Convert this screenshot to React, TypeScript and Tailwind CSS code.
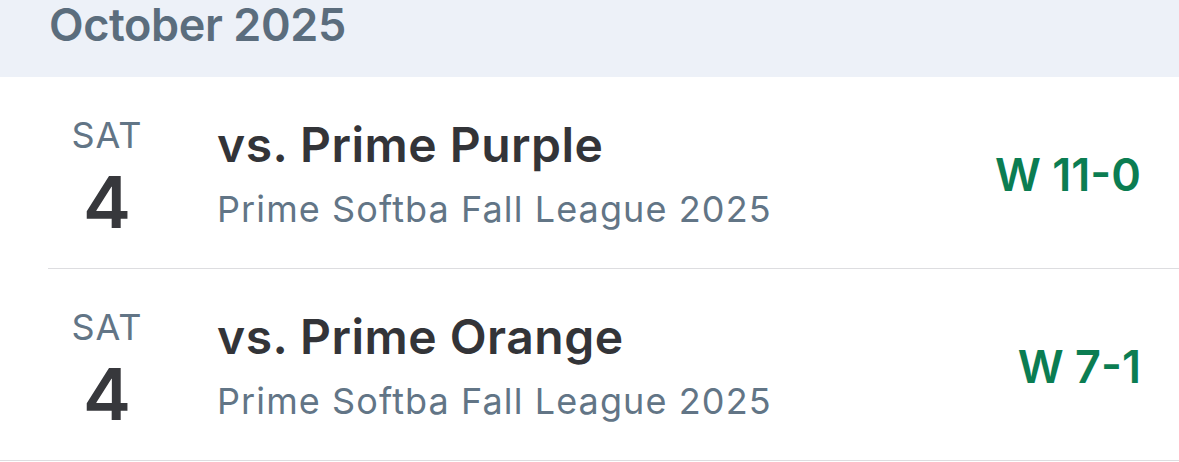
const GAMES = [
  { day: 'SAT', date: '4', opponent: 'vs. Prime Purple', league: 'Prime Softba Fall League 2025', result: 'W 11-0' },
  { day: 'SAT', date: '4', opponent: 'vs. Prime Orange', league: 'Prime Softba Fall League 2025', result: 'W 7-1' },
];

const font = { fontFamily: "Inter, 'Liberation Sans', sans-serif" };

export default function App() {
  return (
    <div className="w-[1179px] h-[462px] overflow-hidden bg-white" style={font}>
      {/* Month header */}
      <div className="h-[77px] bg-[#edf1f8] pl-[49px]">
        <h2 className="text-[45px] leading-[50px] font-semibold tracking-[-0.4px] text-[#5b6d7d]">October 2025</h2>
      </div>

      {GAMES.map((g, i) => (
        <div key={i} className={i === 0 ? 'pl-[48px]' : ''}>
          <div
            className={
              'h-[192px] flex items-start border-b border-[#dddde0] ' + (i === 0 ? '' : 'pl-[48px]')
            }
          >
            <div className="w-[118px] pt-[40px] flex flex-col items-center">
              <span className="text-[36px] leading-[36px] tracking-[1px] text-[#627586]">{g.day}</span>
              <span className="mt-[13px] text-[72px] leading-[72px] font-semibold text-[#37383c]">{g.date}</span>
            </div>
            <div className="ml-[51px] pt-[44px] flex-1 flex flex-col">
              <span className="text-[48px] leading-[48px] font-semibold tracking-[0.5px] text-[#333438]">{g.opponent}</span>
              <span className="mt-[22px] text-[36px] leading-[36px] tracking-[1.1px] text-[#627586]">{g.league}</span>
            </div>
            <div className="pt-[75px] pr-[38px]">
              <span className="text-[45px] leading-[45px] font-semibold text-[#0b7d52]">{g.result}</span>
            </div>
          </div>
        </div>
      ))}
    </div>
  );
}
